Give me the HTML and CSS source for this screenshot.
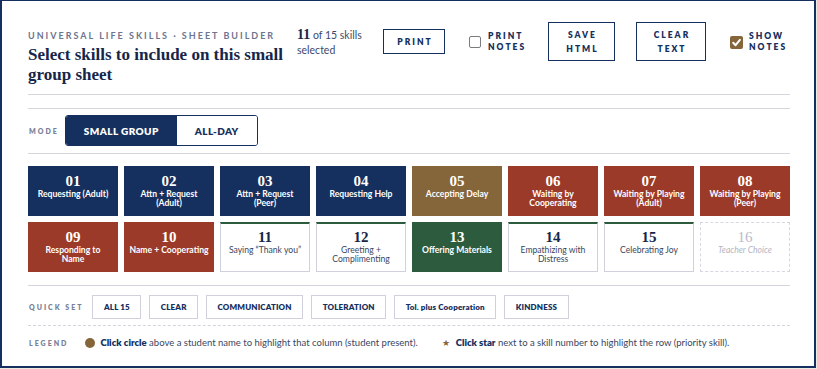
FILE: index.html
```html
<!DOCTYPE html>
<html lang="en">
<head>
<meta charset="utf-8">
<title>Sheet Builder</title>
<link rel="stylesheet" href="styles.css">
</head>
<body>
<div class="panel">
  <header class="top">
    <div class="titles">
      <div class="eyebrow">Universal Life Skills · Sheet Builder</div>
      <h1>Select skills to include on this small group sheet</h1>
    </div>
    <div class="count"><div><b>11</b> of 15 skills</div><div>selected</div></div>
    <button class="btn btn-print">Print</button>
    <label class="chk chk-print"><span class="box"></span><span class="chk-text">Print<br>Notes</span></label>
    <button class="btn btn-tall btn-save">Save<br>HTML</button>
    <button class="btn btn-tall btn-clear">Clear<br>Text</button>
    <label class="chk chk-show"><span class="box on"><svg viewBox="0 0 13 13" width="13" height="13"><path d="M3.2 6.8 L5.6 9.2 L9.9 3.9" fill="none" stroke="#fff" stroke-width="2" stroke-linecap="round" stroke-linejoin="round"/></svg></span><span class="chk-text">Show<br>Notes</span></label>
  </header>

  <section class="mode-row">
    <span class="row-label">Mode</span>
    <div class="seg">
      <button class="seg-btn active">SMALL GROUP</button>
      <button class="seg-btn">ALL-DAY</button>
    </div>
  </section>

  <section class="tiles">
    <div class="tile navy"><span class="num">01</span><span class="lbl">Requesting (Adult)</span></div>
    <div class="tile navy"><span class="num">02</span><span class="lbl">Attn + Request<br>(Adult)</span></div>
    <div class="tile navy"><span class="num">03</span><span class="lbl">Attn + Request<br>(Peer)</span></div>
    <div class="tile navy"><span class="num">04</span><span class="lbl">Requesting Help</span></div>
    <div class="tile brown"><span class="num">05</span><span class="lbl">Accepting Delay</span></div>
    <div class="tile red"><span class="num">06</span><span class="lbl">Waiting by<br>Cooperating</span></div>
    <div class="tile red"><span class="num">07</span><span class="lbl">Waiting by Playing<br>(Adult)</span></div>
    <div class="tile red"><span class="num">08</span><span class="lbl">Waiting by Playing<br>(Peer)</span></div>
    <div class="tile red"><span class="num">09</span><span class="lbl">Responding to<br>Name</span></div>
    <div class="tile red"><span class="num">10</span><span class="lbl">Name + Cooperating</span></div>
    <div class="tile off"><span class="num">11</span><span class="lbl">Saying “Thank you”</span></div>
    <div class="tile off"><span class="num">12</span><span class="lbl">Greeting +<br>Complimenting</span></div>
    <div class="tile green"><span class="num">13</span><span class="lbl">Offering Materials</span></div>
    <div class="tile off"><span class="num">14</span><span class="lbl">Empathizing with<br>Distress</span></div>
    <div class="tile off"><span class="num">15</span><span class="lbl">Celebrating Joy</span></div>
    <div class="tile empty"><span class="num">16</span><span class="lbl">Teacher Choice</span></div>
  </section>

  <section class="quick-row">
    <span class="row-label">Quick Set</span>
    <button class="qbtn">ALL 15</button>
    <button class="qbtn">CLEAR</button>
    <button class="qbtn">COMMUNICATION</button>
    <button class="qbtn">TOLERATION</button>
    <button class="qbtn">Tol. plus Cooperation</button>
    <button class="qbtn">KINDNESS</button>
  </section>

  <section class="legend-row">
    <span class="row-label">Legend</span>
    <span class="dot"></span>
    <span class="legend-text"><b>Click circle</b> above a student name to highlight that column (student present).</span>
    <span class="star">★</span>
    <span class="legend-text"><b>Click star</b> next to a skill number to highlight the row (priority skill).</span>
  </section>
</div>
</body>
</html>
```

FILE: styles.css
```css
* { box-sizing: border-box; }

html, body {
  margin: 0;
  padding: 0;
  background: #eeeae0;
}

body {
  font-family: Lato, "Noto Sans", sans-serif;
  color: #15305e;
}

button {
  font-family: inherit;
  background: #fff;
  cursor: pointer;
  padding: 0;
}

.panel {
  width: 816px;
  height: 368px;
  background: #fff;
  border: 2px solid #15305e;
  border-top-width: 1px;
  padding: 0 24px 0 26px;
}

/* ---------- header ---------- */
.top {
  display: flex;
  align-items: flex-start;
  height: 94px;
  padding-top: 21px;
  border-bottom: 1px solid #d3d4de;
}

.titles {
  width: 266px;
  margin-top: 8px;
}

.eyebrow {
  font-size: 9px;
  line-height: 12px;
  font-weight: 700;
  letter-spacing: 2px;
  text-transform: uppercase;
  white-space: nowrap;
  color: #6c7590;
}

h1 {
  margin: 3px 0 0;
  font-family: "Liberation Serif", "DejaVu Serif", serif;
  font-size: 17px;
  line-height: 19.5px;
  font-weight: 700;
  color: #15264a;
}

.count {
  width: 76px;
  margin-left: 3px;
  margin-top: 5px;
  font-size: 10.5px;
  line-height: 15px;
  color: #3c4a6a;
}

.count b {
  font-family: "Liberation Serif", serif;
  font-size: 14px;
  color: #15264a;
}

.btn {
  border: 1.5px solid #15305e;
  color: #15305e;
  font-size: 8.5px;
  font-weight: 800;
  letter-spacing: 2px;
  text-transform: uppercase;
  text-align: center;
}

.btn-print {
  width: 62px;
  height: 25px;
  margin-left: 10px;
  margin-top: 7px;
  padding-left: 2px;
}

.btn-tall {
  height: 39px;
  line-height: 14px;
  padding-left: 2px;
}

.btn-save { width: 67px; margin-left: 24px; }
.btn-clear { width: 70px; margin-left: 21px; }

.chk {
  display: flex;
  align-items: center;
  height: 39px;
  gap: 7px;
}

.chk-print { width: 55px; margin-left: 24px; }
.chk-show { margin-left: 24px; gap: 6px; }

.box {
  width: 12px;
  height: 12px;
  border: 1.3px solid #7b7b80;
  border-radius: 2px;
  flex: none;
  margin-top: 1px;
}

.box.on {
  width: 13px;
  height: 13px;
  border: none;
  background: #85653a;
  display: flex;
}

.chk-text {
  font-size: 8.5px;
  line-height: 11px;
  font-weight: 800;
  letter-spacing: 2px;
  text-transform: uppercase;
  color: #15305e;
}

/* ---------- row labels ---------- */
.row-label {
  font-size: 7px;
  font-weight: 800;
  letter-spacing: 2px;
  text-transform: uppercase;
  color: #7a8298;
  padding-left: 1px;
}

/* ---------- mode ---------- */
.mode-row {
  display: flex;
  align-items: center;
  margin-top: 13px;
  border-top: 1px solid #d3d4de;
  border-bottom: 1px solid #d3d4de;
  padding: 6px 0 7px;
}

.seg {
  display: flex;
  margin-left: 6px;
  height: 31px;
  border: 1.5px solid #15305e;
  border-radius: 3px;
  overflow: hidden;
}

.seg-btn {
  border: none;
  font-size: 10px;
  font-weight: 800;
  letter-spacing: 0.4px;
  color: #15305e;
}

.seg-btn.active {
  width: 111px;
  background: #15305e;
  color: #fff;
}

.seg-btn:not(.active) { width: 80px; }

/* ---------- tiles ---------- */
.tiles {
  display: grid;
  grid-template-columns: repeat(8, 90px);
  grid-auto-rows: 50px;
  gap: 6px;
  padding: 12px 0 13px;
  border-bottom: 1px solid #d3d4de;
}

.tile {
  display: flex;
  flex-direction: column;
  align-items: center;
  padding-top: 7px;
  text-align: center;
  color: #fff;
}

.num {
  font-family: "Liberation Serif", serif;
  font-size: 15px;
  line-height: 16px;
  font-weight: 700;
}

.lbl {
  font-size: 8.6px;
  line-height: 9px;
  font-weight: 700;
  margin-top: 1px;
}

.navy { background: #15305e; }
.brown { background: #85653a; }
.red { background: #9b3a29; }
.green { background: #2c5c3d; }

.off {
  background: #fff;
  border: 1.5px solid #d0d1dd;
  border-top: 2.5px solid #2c5c3d;
  padding-top: 5px;
  color: #15264a;
}

.off .lbl {
  font-weight: 400;
  color: #3a4660;
}

.empty {
  background: #fff;
  border: 1.5px dashed #d6d7e0;
  padding-top: 5.5px;
  color: #b9bcca;
}

.empty .num { font-weight: 400; }
.empty .lbl { font-weight: 400; font-style: italic; color: #b3b6c4; }

/* ---------- quick set ---------- */
.quick-row {
  display: flex;
  align-items: center;
  gap: 8px;
  padding: 9px 0 6px;
  border-bottom: 1px dashed #d3d4de;
}

.quick-row .row-label { margin-right: 1px; }

.qbtn {
  height: 24px;
  padding: 0 10.5px;
  border: 1.5px solid #d0d1dd;
  font-size: 8px;
  font-weight: 800;
  letter-spacing: 0.15px;
  color: #15305e;
}

/* ---------- legend ---------- */
.legend-row {
  display: flex;
  align-items: center;
  padding-top: 5px;
  height: 28px;
}

.dot {
  width: 10px;
  height: 10px;
  border-radius: 50%;
  background: #85653a;
  margin-left: 17px;
  margin-right: 5px;
}

.legend-text {
  font-size: 9.5px;
  color: #3a4660;
}

.legend-text b {
  color: #15305e;
  font-weight: 800;
}

.star {
  color: #85653a;
  font-size: 9px;
  margin-left: 24px;
  margin-right: 6px;
}
```
